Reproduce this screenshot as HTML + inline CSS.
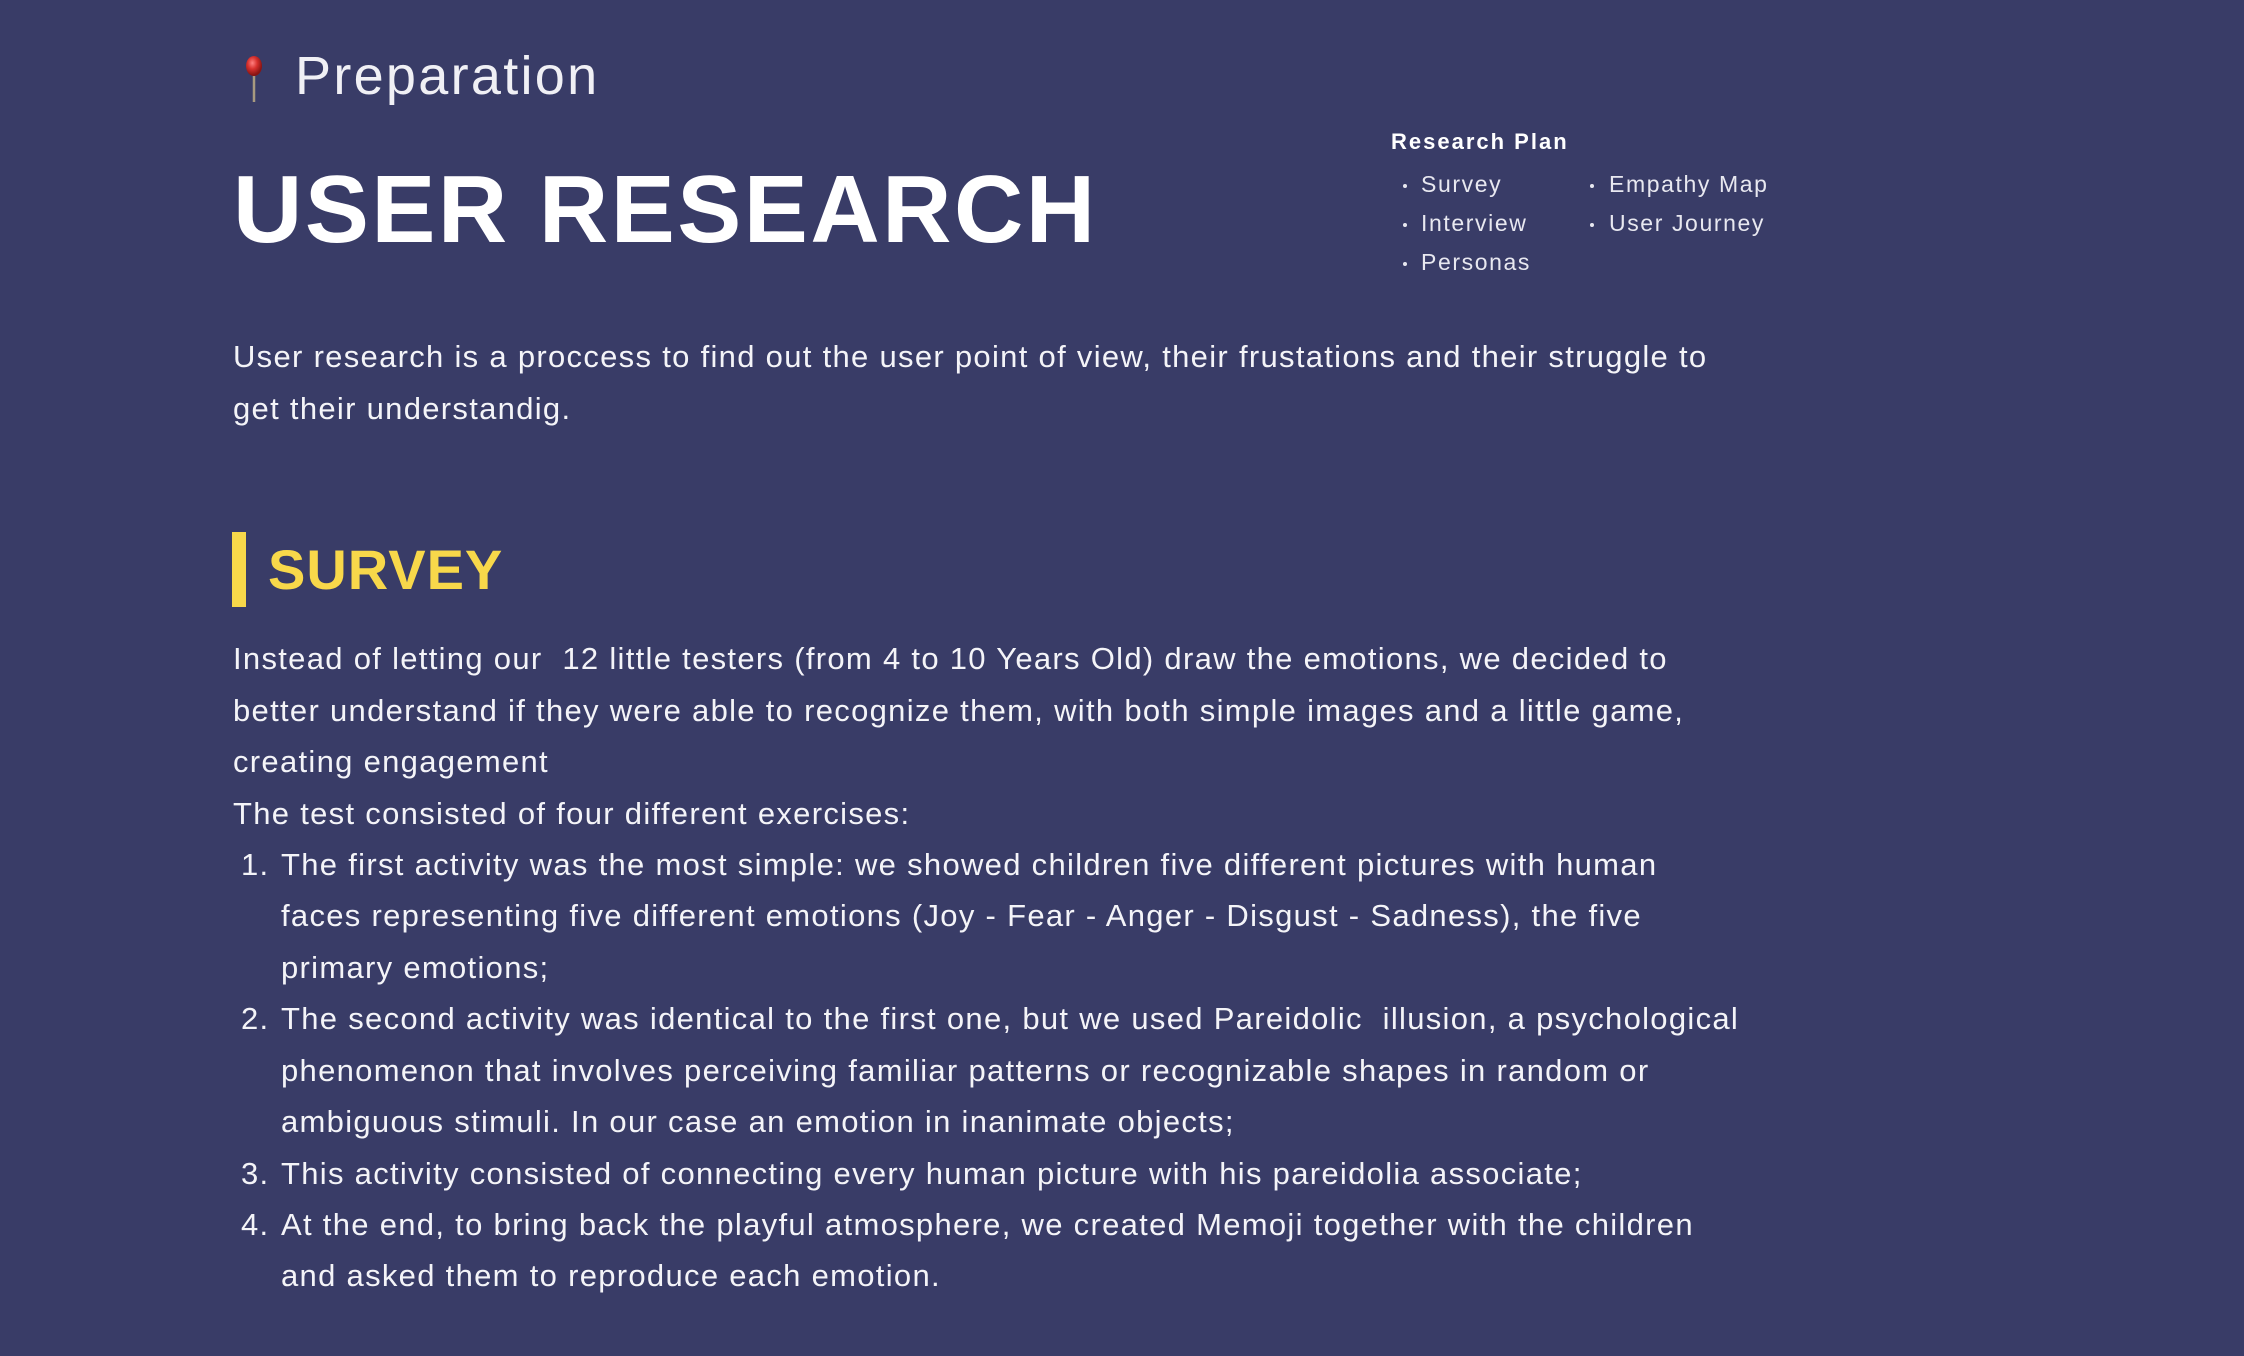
<!DOCTYPE html>
<html><head><meta charset="utf-8"><style>
html,body{margin:0;padding:0;}
body{width:2244px;height:1356px;background:#393c67;position:relative;overflow:hidden;font-family:"Liberation Sans",sans-serif;color:#fff;}
.a{position:absolute;white-space:nowrap;}
.t{font-size:31px;line-height:52px;color:#f4f4f8;letter-spacing:1.3px;}
.ri{font-size:23px;color:#e8e8f0;letter-spacing:1.6px;}
.dot{position:absolute;width:4px;height:4px;border-radius:2px;background:#e8e8f0;}
</style></head><body>
<svg class="a" style="left:240px;top:52px" width="30" height="52" viewBox="0 0 30 52">
<defs><radialGradient id="g" cx="0.4" cy="0.35" r="0.6"><stop offset="0" stop-color="#ff8080"/><stop offset="0.5" stop-color="#d8312e"/><stop offset="1" stop-color="#8a1514"/></radialGradient></defs>
<line x1="14" y1="24" x2="14" y2="50" stroke="#a89a80" stroke-width="2.5"/>
<ellipse cx="14" cy="14" rx="8" ry="10" fill="url(#g)"/>
</svg>
<div class="a" style="left:295px;top:44px;font-size:54px;line-height:64px;color:#f0f0f5;letter-spacing:2.3px;">Preparation</div>
<div class="a" style="left:233px;top:150px;font-size:96px;line-height:120px;font-weight:bold;letter-spacing:2.5px;">USER RESEARCH</div>

<div class="a" style="left:1391px;top:129px;font-size:22px;font-weight:bold;letter-spacing:2px;">Research Plan</div>
<div class="dot" style="left:1403px;top:184px"></div><div class="a ri" style="left:1421px;top:171px">Survey</div>
<div class="dot" style="left:1403px;top:223px"></div><div class="a ri" style="left:1421px;top:210px">Interview</div>
<div class="dot" style="left:1403px;top:262px"></div><div class="a ri" style="left:1421px;top:249px">Personas</div>
<div class="dot" style="left:1590px;top:184px"></div><div class="a ri" style="left:1609px;top:171px">Empathy Map</div>
<div class="dot" style="left:1590px;top:223px"></div><div class="a ri" style="left:1609px;top:210px">User Journey</div>

<div class="a t" style="left:233px;top:331px">User research is a proccess to find out the user point of view, their frustations and their struggle to</div>
<div class="a t" style="left:233px;top:383px">get their understandig.</div>

<div class="a" style="left:232px;top:532px;width:14px;height:75px;background:#f8d84a"></div>
<div class="a" style="left:268px;top:536px;font-size:56px;line-height:68px;font-weight:bold;color:#f8d84a;letter-spacing:1px;">SURVEY</div>

<div class="a t" style="left:233px;top:633px">Instead of letting our&nbsp; 12 little testers (from 4 to 10 Years Old) draw the emotions, we decided to</div>
<div class="a t" style="left:233px;top:685px">better understand if they were able to recognize them, with both simple images and a little game,</div>
<div class="a t" style="left:233px;top:736px">creating engagement</div>
<div class="a t" style="left:233px;top:788px">The test consisted of four different exercises:</div>
<div class="a t" style="left:241px;top:839px">1.</div>
<div class="a t" style="left:281px;top:839px">The first activity was the most simple: we showed children five different pictures with human</div>
<div class="a t" style="left:281px;top:890px">faces representing five different emotions (Joy - Fear - Anger - Disgust - Sadness), the five</div>
<div class="a t" style="left:281px;top:942px">primary emotions;</div>
<div class="a t" style="left:241px;top:993px">2.</div>
<div class="a t" style="left:281px;top:993px">The second activity was identical to the first one, but we used Pareidolic&nbsp; illusion, a psychological</div>
<div class="a t" style="left:281px;top:1045px">phenomenon that involves perceiving familiar patterns or recognizable shapes in random or</div>
<div class="a t" style="left:281px;top:1096px">ambiguous stimuli. In our case an emotion in inanimate objects;</div>
<div class="a t" style="left:241px;top:1148px">3.</div>
<div class="a t" style="left:281px;top:1148px">This activity consisted of connecting every human picture with his pareidolia associate;</div>
<div class="a t" style="left:241px;top:1199px">4.</div>
<div class="a t" style="left:281px;top:1199px">At the end, to bring back the playful atmosphere, we created Memoji together with the children</div>
<div class="a t" style="left:281px;top:1250px">and asked them to reproduce each emotion.</div>
</body></html>
